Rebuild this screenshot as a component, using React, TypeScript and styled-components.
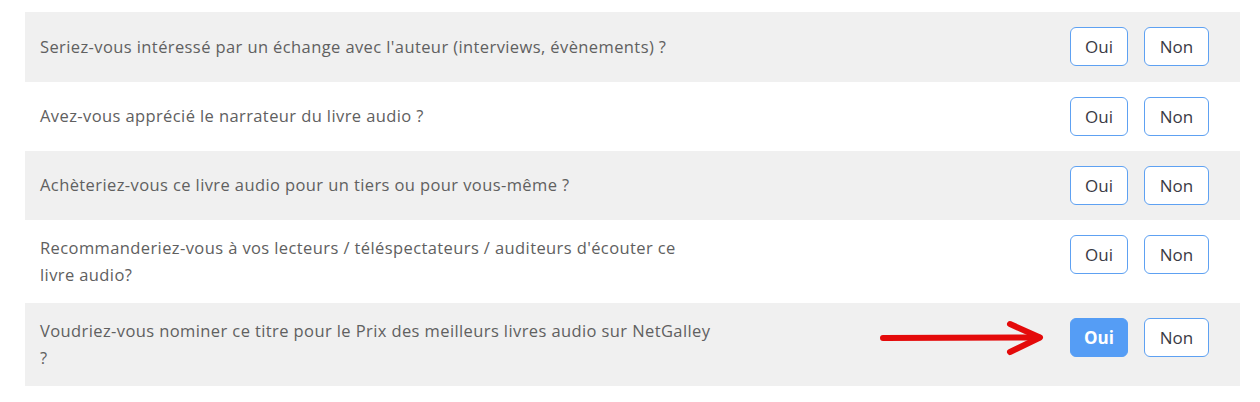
import styled, { createGlobalStyle } from 'styled-components';

const GlobalStyle = createGlobalStyle`
  html, body {
    margin: 0;
    padding: 0;
    background: #ffffff;
  }
  body {
    font-family: 'Open Sans', 'Lato', sans-serif;
  }
`;

const Page = styled.div`
  padding: 12px 20px 16px 25px;
`;

const List = styled.div`
  display: flex;
  flex-direction: column;
`;

const Row = styled.div<{ $shaded: boolean }>`
  display: flex;
  justify-content: space-between;
  min-height: 69px;
  padding: 15px 31px 15px 15px;
  box-sizing: border-box;
  background: ${(p) => (p.$shaded ? '#f0f0f0' : '#ffffff')};

  &:first-child {
    min-height: 70px;
  }
`;

const Question = styled.p`
  align-self: center;
  margin: 0;
  max-width: 672px;
  font-size: 16.5px;
  letter-spacing: 0.4px;
  line-height: 26.5px;
  color: #606060;
`;

const Actions = styled.div`
  align-self: flex-start;
  display: flex;
  align-items: center;
  gap: 16px;
`;

const Choice = styled.button<{ $active?: boolean; $wide?: boolean }>`
  height: 39px;
  width: ${(p) => (p.$wide ? '65px' : '58px')};
  border-radius: 6px;
  font-family: 'Open Sans', 'Lato', sans-serif;
  font-size: 17px;
  cursor: pointer;
  border: 1px solid ${(p) => (p.$active ? '#559df5' : '#5ea1f2')};
  background: ${(p) => (p.$active ? '#559df5' : '#ffffff')};
  color: ${(p) => (p.$active ? '#ffffff' : '#3a3a44')};
  font-weight: ${(p) => (p.$active ? 700 : 400)};
`;

const Arrow = styled.svg`
  display: block;
  margin-right: 7px;
`;

const questions = [
  { text: "Seriez-vous intéressé par un échange avec l'auteur (interviews, évènements) ?", answer: '' },
  { text: 'Avez-vous apprécié le narrateur du livre audio ?', answer: '' },
  { text: 'Achèteriez-vous ce livre audio pour un tiers ou pour vous-même ?', answer: '' },
  { text: "Recommanderiez-vous à vos lecteurs / téléspectateurs / auditeurs d'écouter ce livre audio?", answer: '' },
  { text: 'Voudriez-vous nominer ce titre pour le Prix des meilleurs livres audio sur NetGalley ?', answer: 'oui' },
];

function RedArrow() {
  return (
    <Arrow width="168" height="36" viewBox="0 0 168 36">
      <path d="M4 18 L160 17.5" stroke="#e40a0a" strokeWidth="6" strokeLinecap="round" fill="none" />
      <path d="M131 4 L161 17.5 L131 32" stroke="#e40a0a" strokeWidth="6" strokeLinecap="round" strokeLinejoin="round" fill="none" />
    </Arrow>
  );
}

export default function App() {
  return (
    <>
      <GlobalStyle />
      <Page>
        <List>
          {questions.map((q, i) => (
            <Row key={i} $shaded={i % 2 === 0}>
              <Question>{q.text}</Question>
              <Actions>
                {q.answer === 'oui' && <RedArrow />}
                <Choice $active={q.answer === 'oui'}>Oui</Choice>
                <Choice $wide>Non</Choice>
              </Actions>
            </Row>
          ))}
        </List>
      </Page>
    </>
  );
}
